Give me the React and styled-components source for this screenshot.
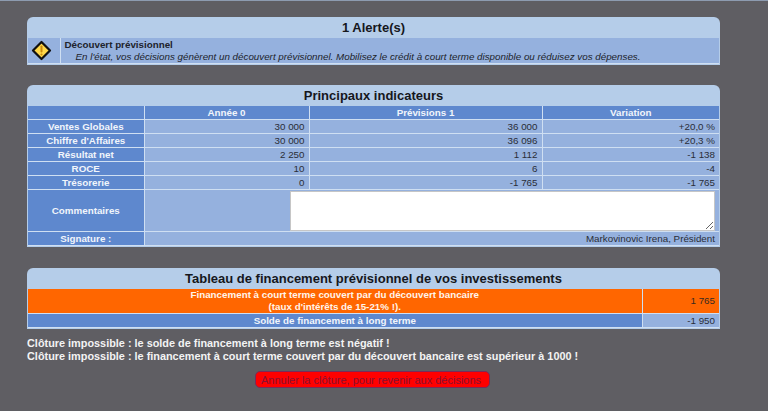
import React from "react";
import styled, { createGlobalStyle } from "styled-components";

const Global = createGlobalStyle`
  html, body { margin: 0; padding: 0; background: #5f5e63; height: 411px; overflow: hidden; }
  body { font-family: "Liberation Sans", Arial, sans-serif; font-size: 9.8px; }
  #root { height: 411px; }
`;
const Page = styled.div`
  height: 411px;
  box-sizing: border-box;
  border-top: 1px solid #8d9bb0;
  padding: 16px 48px 0 27px;
  display: flex;
  flex-direction: column;
`;
const Panel = styled.section`
  background: #b5cde9;
  border-radius: 6px 6px 0 0;
  margin-bottom: ${p => p.$gap}px;
  padding-bottom: 1px;
  flex: none;
`;
const Title = styled.h2`
  margin: 0;
  height: 21px;
  line-height: 21px;
  text-align: center;
  font-size: 13px;
  font-weight: bold;
  color: #15171c;
`;
const Table = styled.table`
  width: 691px;
  margin-left: 1px;
  border-collapse: collapse;
  table-layout: fixed;
  background: #95b1de;
  font-size: 9.8px;
`;
const Cell = styled.td`
  padding: 0 ${p => (p.$head ? 0 : 4)}px;
  height: ${p => p.$h || 13}px;
  line-height: 12px;
  border: 1px solid #cfdff2;
  text-align: ${p => (p.$head ? "center" : "right")};
  color: ${p => (p.$head ? "#f1f5fb" : "#2a2d36")};
  font-weight: ${p => (p.$head ? "bold" : "normal")};
  background: ${p => (p.$head ? "#5e88ce" : "#95b1de")};
  vertical-align: middle;
  &:first-child { border-left: 0; }
  &:last-child { border-right: 0; }
`;
const TopCell = styled(Cell)`
  border-top: 0;
`;
const OrangeCell = styled(TopCell)`
  background: #ff6600;
  color: ${p => (p.$head ? "#fff4ea" : "#3a2a20")};
  height: 24px;
`;
const Row = styled.tr``;
const AlertTable = styled(Table)`
  border-bottom: 1px solid #cfdff2;
`;
const IconCell = styled.td`
  height: 25px;
  padding: 0 4px 0 0;
  background: #95b1de;
  border-right: 1px solid #cfdff2;
  vertical-align: middle;
`;
const AlertBody = styled.td`
  padding: 0 0 0 4px;
  background: #95b1de;
  color: #20232b;
  line-height: 12px;
  vertical-align: middle;
`;
const AlertName = styled.div`
  font-weight: bold;
`;
const AlertText = styled.div`
  font-style: italic;
  padding-left: 11px;
`;
const NoteCell = styled.td`
  height: 41px;
  padding: 0 4px 0 0;
  background: #95b1de;
  border: 1px solid #cfdff2;
  border-right: 0;
  vertical-align: middle;
`;
const Note = styled.textarea`
  display: block;
  margin-left: auto;
  width: 425px;
  height: 40px;
  box-sizing: border-box;
  background: #fff;
  border: 1px solid #c6c6c6;
  padding: 2px;
  resize: both;
  font-family: inherit;
`;
const Warnings = styled.div`
  margin-top: 8px;
  font-size: 10.88px;
  line-height: 12.5px;
  font-weight: bold;
  color: #f3f3f3;
`;
const Actions = styled.div`
  margin-top: 9px;
  padding-right: 2px;
  display: flex;
  justify-content: center;
`;
const Cancel = styled.button`
  width: 235px;
  height: 17px;
  padding: 0 3px 0 0;
  border: 1px solid #7b2a5a;
  border-radius: 5px;
  background: #ff0000;
  color: #8a1030;
  font-family: inherit;
  font-size: 11px;
  line-height: 12px;
  white-space: nowrap;
`;
const IconSvg = styled.svg`
  display: block;
  margin: 0 auto;
`;

const rows = [
  ["Ventes Globales", "30 000", "36 000", "+20,0 %"],
  ["Chiffre d'Affaires", "30 000", "36 096", "+20,3 %"],
  ["Résultat net", "2 250", "1 112", "-1 138"],
  ["ROCE", "10", "6", "-4"],
  ["Trésorerie", "0", "-1 765", "-1 765"],
];

const WarningIcon = () => (
  <IconSvg width="21" height="21" viewBox="0 0 21 21">
    <path d="M10.5 2 L19 10.5 L10.5 19 L2 10.5 Z" fill="#ffd84a" stroke="#111" strokeWidth="2.2" strokeLinejoin="round" />
    <rect x="9.5" y="5.5" width="2" height="7" rx="0.8" fill="#c98a10" />
    <rect x="9.5" y="13.5" width="2" height="2" rx="0.8" fill="#c98a10" />
  </IconSvg>
);

export default function App() {
  return (
    <Page>
      <Global />
      <Panel $gap={20}>
        <Title>1 Alerte(s)</Title>
        <AlertTable>
          <colgroup>
            <col style={{ width: 32 }} />
            <col />
          </colgroup>
          <tbody>
            <Row>
              <IconCell><WarningIcon /></IconCell>
              <AlertBody>
                <AlertName>Découvert prévisionnel</AlertName>
                <AlertText>
                  En l'état, vos décisions génèrent un découvert prévisionnel. Mobilisez le crédit à court terme disponible ou réduisez vos dépenses.
                </AlertText>
              </AlertBody>
            </Row>
          </tbody>
        </AlertTable>
      </Panel>

      <Panel $gap={21}>
        <Title>Principaux indicateurs</Title>
        <Table>
          <colgroup>
            <col style={{ width: 116 }} />
            <col style={{ width: 165 }} />
            <col style={{ width: 233 }} />
            <col />
          </colgroup>
          <tbody>
            <Row>
              <TopCell $head />
              <TopCell $head>Année 0</TopCell>
              <TopCell $head>Prévisions 1</TopCell>
              <TopCell $head>Variation</TopCell>
            </Row>
            {rows.map(r => (
              <Row key={r[0]}>
                <Cell $head>{r[0]}</Cell>
                <Cell>{r[1]}</Cell>
                <Cell>{r[2]}</Cell>
                <Cell>{r[3]}</Cell>
              </Row>
            ))}
            <Row>
              <Cell $head $h={41}>Commentaires</Cell>
              <NoteCell colSpan={3}><Note /></NoteCell>
            </Row>
            <Row>
              <Cell $head>Signature :</Cell>
              <Cell colSpan={3}>Markovinovic Irena, Président</Cell>
            </Row>
          </tbody>
        </Table>
      </Panel>

      <Panel $gap={0}>
        <Title>Tableau de financement prévisionnel de vos investissements</Title>
        <Table>
          <colgroup>
            <col />
            <col style={{ width: 77 }} />
          </colgroup>
          <tbody>
            <Row>
              <OrangeCell $head>
                Financement à court terme couvert par du découvert bancaire<br />
                (taux d'intérêts de 15-21% !).
              </OrangeCell>
              <OrangeCell>1 765</OrangeCell>
            </Row>
            <Row>
              <Cell $head>Solde de financement à long terme</Cell>
              <Cell>-1 950</Cell>
            </Row>
          </tbody>
        </Table>
      </Panel>

      <Warnings>
        <div>Clôture impossible : le solde de financement à long terme est négatif !</div>
        <div>Clôture impossible : le financement à court terme couvert par du découvert bancaire est supérieur à 1000 !</div>
      </Warnings>
      <Actions>
        <Cancel>Annuler la clôture, pour revenir aux décisions</Cancel>
      </Actions>
    </Page>
  );
}
